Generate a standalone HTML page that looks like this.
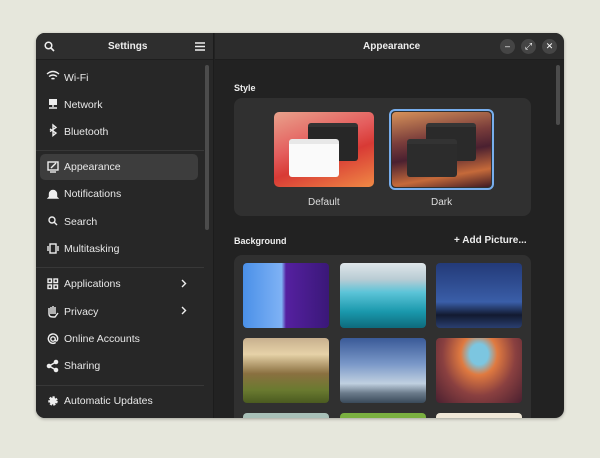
<!DOCTYPE html>
<html><head><style>
*{margin:0;padding:0;box-sizing:border-box}
body{width:600px;height:458px;background:#e6e7dc;font-family:"Liberation Sans",sans-serif;position:relative;overflow:hidden;color:#fff}
.win{position:absolute;left:36px;top:33px;width:528px;height:385px;border-radius:9px;overflow:hidden;background:#222;box-shadow:0 1px 3px rgba(0,0,0,.3)}
.side{position:absolute;left:0;top:0;width:178px;height:385px;background:#272727;border-right:1px solid #1c1c1c}
.shead{height:27px;background:#2e2e2e;border-bottom:1px solid #1e1e1e;position:relative}
.chead{position:absolute;left:179px;top:0;right:0;height:27px;background:#2c2c2c;border-bottom:1px solid #1e1e1e}
.t{position:absolute;font-size:10px;font-weight:bold;color:#eee}
.item{position:absolute;left:28px;font-size:10.5px;color:#e8e8e8}
.sel{position:absolute;left:4px;top:121px;width:158px;height:26px;background:#3d3d3d;border-radius:5px}
.sep{position:absolute;left:0;width:168px;height:1px;background:#383838}
.sb{position:absolute;width:4px;border-radius:2px;background:#555}
.box{position:absolute;background:#303030;border-radius:8px}
.th{position:absolute;width:86px;height:65px;border-radius:4px}
.btn{position:absolute;top:6px;width:15px;height:15px;border-radius:50%;background:#454545;font-size:9px;text-align:center;line-height:15px;color:#fff}
</style></head><body>
<div class="win">
<div class="side">
 <div class="shead">
  <svg style="position:absolute;left:8px;top:8px" width="11" height="11" viewBox="0 0 11 11"><circle cx="4.5" cy="4.5" r="3.3" stroke="#eee" stroke-width="1.5" fill="none"/><path d="M7 7l3 3" stroke="#eee" stroke-width="1.6"/></svg>
  <div class="t" style="left:72px;top:8px">Settings</div>
  <svg style="position:absolute;left:159px;top:9px" width="10" height="9"><path d="M0 1h10M0 4.5h10M0 8h10" stroke="#eee" stroke-width="1.4"/></svg>
 </div>
 <div class="sel"></div>
 <div class="sep" style="top:117px"></div>
 <div class="sep" style="top:234px"></div>
 <div class="sep" style="top:352px"></div>
 <div class="item" style="top:39px">Wi-Fi</div>
 <div class="item" style="top:66px">Network</div>
 <div class="item" style="top:93px">Bluetooth</div>
 <div class="item" style="top:128px">Appearance</div>
 <div class="item" style="top:155px">Notifications</div>
 <div class="item" style="top:183px">Search</div>
 <div class="item" style="top:210px">Multitasking</div>
 <div class="item" style="top:245px">Applications</div>
 <div class="item" style="top:273px">Privacy</div>
 <div class="item" style="top:300px">Online Accounts</div>
 <div class="item" style="top:327px">Sharing</div>
 <div class="item" style="top:362px">Automatic Updates</div>
 <svg style="position:absolute;left:0;top:0" width="178" height="385" fill="none" stroke="#eee" stroke-width="1.4">
  <path d="M11 41q6-5 12 0M13 43.5q4-3 8 0M15.5 46q1.5-1 3 0"/>
  <rect x="13" y="66" width="8" height="6" fill="#eee" stroke="none"/><path d="M17 72v2M13 75h8"/>
  <path d="M14 96l6 4-3 2.5V92l3 2.5-6 4"/>
  <rect x="12" y="129" width="10" height="8"/><path d="M15 135l5-5"/><path d="M14 139h6"/>
  <path d="M13.5 164v-3a3.5 3.5 0 0 1 7 0v3l1 1h-9z" fill="#eee"/>
  <circle cx="16" cy="187" r="3"/><path d="M18 189l3 3"/>
  <rect x="14" y="211" width="6" height="9"/><path d="M12 213v5M22 213v5"/>
  <rect x="12" y="246" width="3.5" height="3.5"/><rect x="18" y="246" width="3.5" height="3.5"/><rect x="12" y="252" width="3.5" height="3.5"/><rect x="18" y="252" width="3.5" height="3.5"/>
  <path d="M13 275v6q0 3 4 3h2l3-4M15 281v-7M17 281v-8M19 281v-7" />
  <circle cx="17" cy="306" r="2.2"/><path d="M19.2 306v1.5q2 1.5 2.5-1.5a4.7 4.7 0 1 0-2 3.5"/>
  <circle cx="20" cy="329" r="1.6" fill="#eee"/><circle cx="13" cy="333" r="1.6" fill="#eee"/><circle cx="20" cy="337" r="1.6" fill="#eee"/><path d="M20 329l-7 4 7 4"/>
  <circle cx="17" cy="368" r="3.5" fill="#eee" stroke-dasharray="2 1.2" stroke-width="2.5"/>
  <path d="M146 247l3.5 3.5-3.5 3.5M146 274l3.5 3.5-3.5 3.5"/>
 </svg>
 <div class="sb" style="left:169px;top:32px;height:165px;background:#4c4c4c"></div>
</div>
<div class="chead">
 <div class="t" style="left:148px;top:8px">Appearance</div>
 <div class="btn" style="left:285px">&#8211;</div>
 <div class="btn" style="left:306px">&#10530;</div>
 <div class="btn" style="left:327px">&#10005;</div>
</div>
<div class="sb" style="left:520px;top:32px;height:60px;background:#4c4c4c"></div>
<div class="t" style="left:198px;top:50px;font-size:9px">Style</div>
<div class="box" style="left:198px;top:65px;width:297px;height:118px"></div>
<div style="position:absolute;left:238px;top:79px;width:100px;height:75px;border-radius:5px;background:linear-gradient(160deg,#e9a28c 0%,#e45d5d 40%,#d83a35 60%,#f08a45 100%)"></div>
<div style="position:absolute;left:272px;top:90px;width:50px;height:38px;border-radius:3px;background:#272727;border-top:4px solid #333"></div>
<div style="position:absolute;left:253px;top:106px;width:50px;height:38px;border-radius:3px;background:#fafafa;border-top:5px solid #e8e8e8"></div>
<div style="position:absolute;left:353px;top:76px;width:105px;height:81px;border-radius:6px;border:2px solid #78aeed;padding:1px">
 <div style="width:100%;height:100%;border-radius:4px;background:linear-gradient(170deg,#d7925a 0%,#7a3d3b 35%,#4a2030 55%,#c56a3a 80%,#401a25 100%)"></div></div>
<div style="position:absolute;left:390px;top:90px;width:50px;height:38px;border-radius:3px;background:#2a2a2a;border-top:4px solid #353535"></div>
<div style="position:absolute;left:371px;top:106px;width:50px;height:38px;border-radius:3px;background:#2c2c2c;border-top:5px solid #333"></div>
<div style="position:absolute;left:272px;top:164px;font-size:10px;color:#ddd">Default</div>
<div style="position:absolute;left:395px;top:164px;font-size:10px;color:#ddd">Dark</div>
<div class="t" style="left:198px;top:203px;font-size:9px">Background</div>
<div class="t" style="left:418px;top:202px;font-size:10px">+ Add Picture...</div>
<div class="box" style="left:198px;top:222px;width:297px;height:180px"></div>
<div class="th" style="left:207px;top:230px;background:linear-gradient(90deg,#4a90e8 0%,#7fb2f5 45%,#5520a0 50%,#3a1878 100%)"></div>
<div class="th" style="left:304px;top:230px;background:linear-gradient(180deg,#dfe6ea 0%,#b9ccd4 25%,#5cc4d8 45%,#1a98ac 75%,#0e6a7c 100%)"></div>
<div class="th" style="left:400px;top:230px;background:linear-gradient(180deg,#233a78 0%,#3a5ea8 60%,#121a30 80%,#2a3f70 100%)"></div>
<div class="th" style="left:207px;top:305px;background:linear-gradient(180deg,#c8b08e 0%,#e6d2a8 25%,#8a7040 55%,#6a7a30 80%,#4a5a20 100%)"></div>
<div class="th" style="left:304px;top:305px;background:linear-gradient(180deg,#3a5a98 0%,#7a98c8 40%,#c0d0e0 70%,#6a7a8a 85%,#3a4a5a 100%)"></div>
<div class="th" style="left:400px;top:305px;background:radial-gradient(ellipse at 50% 25%,#7cc6e0 0%,#7cc6e0 15%,#e07a40 30%,#8a4040 60%,#4a2030 100%)"></div>
<div class="th" style="left:207px;top:380px;background:#a8c0b8"></div>
<div class="th" style="left:304px;top:380px;background:#7ab040"></div>
<div class="th" style="left:400px;top:380px;background:#f0e8d8"></div>
</div>
</body></html>
